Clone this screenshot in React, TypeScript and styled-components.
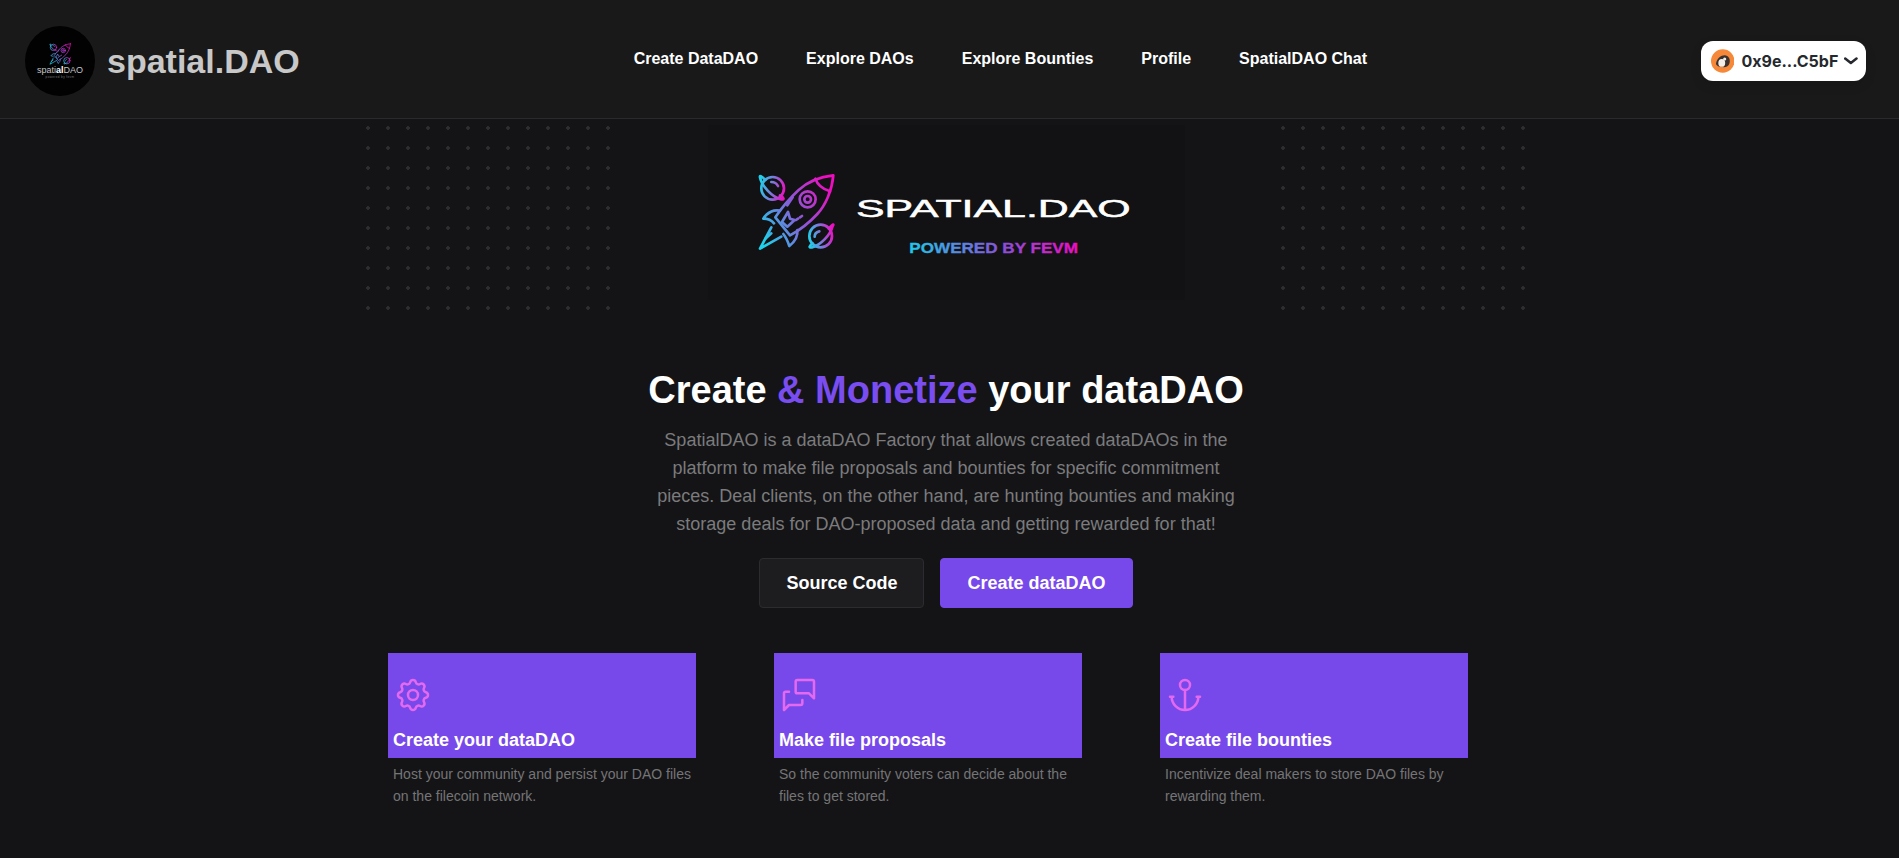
import React from "react";
import styled, { createGlobalStyle } from "styled-components";
import { TbSettings, TbMessages, TbAnchor } from "react-icons/tb";

const GlobalStyle = createGlobalStyle`
  html, body {
    margin: 0;
    background: #141416;
    font-family: "Liberation Sans", Arial, sans-serif;
  }
  * {
    box-sizing: border-box;
  }
`;

const Page = styled.div`
  height: 858px;
  overflow: hidden;
  display: flex;
  flex-direction: column;
  background: #141416;
`;

const Header = styled.header`
  flex: none;
  height: 119px;
  padding: 4px 33px 0 25px;
  display: flex;
  align-items: center;
  justify-content: space-between;
  background: #19191a;
  border-bottom: 1px solid #2a2a2b;
`;

const Brand = styled.div`
  display: flex;
  align-items: center;
  gap: 12px;
  font-size: 34px;
  font-weight: 700;
  color: #c8c8c8;
`;

const BrandCircle = styled.div`
  width: 70px;
  height: 70px;
  border-radius: 50%;
  background: #020203;
  display: flex;
  flex-direction: column;
  align-items: center;
  padding-top: 17px;
`;

const BrandCircleText = styled.span`
  font-size: 9px;
  line-height: 9px;
  margin-top: 1px;
  font-weight: 400;
  color: #c4c4c8;
  b {
    color: #fff;
  }
`;

const BrandCircleSub = styled.span`
  font-size: 3px;
  line-height: 4px;
  letter-spacing: 0.4px;
  font-weight: 400;
  color: #77777a;
`;

const Nav = styled.nav`
  display: flex;
  gap: 48px;
  margin-bottom: 5px;
`;

const NavLink = styled.a`
  font-size: 16px;
  font-weight: 700;
  color: #fff;
  cursor: pointer;
`;

const Wallet = styled.button`
  width: 165px;
  height: 40px;
  padding: 0 8px 0 10px;
  border: 0;
  border-radius: 12px;
  background: #fff;
  display: flex;
  align-items: center;
  gap: 6px;
  font-family: Inter, sans-serif;
  font-size: 16px;
  font-weight: 700;
  color: #25292e;
  box-shadow: 0 4px 12px rgba(0, 0, 0, 0.1);

  svg:first-child {
    margin-right: 1px;
  }
`;

const Hero = styled.section`
  flex: none;
  margin-top: 6px;
  padding-right: 7px;
  display: flex;
  justify-content: center;
  gap: 96px;
`;

const Dots = styled.div`
  width: 246px;
  height: 186px;
  margin-top: 1px;
  background-image: radial-gradient(circle, #2e2e30 1.5px, transparent 2.1px);
  background-size: 20px 20px;
  background-position: -8px -8px;
`;

const Banner = styled.div`
  width: 477px;
  height: 175px;
  background: #121214;
`;

const Intro = styled.section`
  flex: none;
  margin-top: 54px;
  padding-right: 7px;
  display: flex;
  flex-direction: column;
  align-items: center;
`;

const Title = styled.h1`
  margin: 0;
  font-size: 38px;
  line-height: 48px;
  font-weight: 700;
  color: #fff;
  text-align: center;
`;

const Accent = styled.span`
  color: #7a4df0;
`;

const Lead = styled.p`
  width: 590px;
  margin: 12px 0 0;
  font-size: 18px;
  line-height: 28px;
  color: #7b7b7d;
  text-align: center;
`;

const Actions = styled.div`
  margin-top: 20px;
  display: flex;
  gap: 16px;
`;

const ActionButton = styled.button<{ $primary?: boolean }>`
  height: 50px;
  padding: 0 26px;
  border-radius: 4px;
  border: 1px solid ${(p) => (p.$primary ? "#7849ea" : "#2c2c30")};
  background: ${(p) => (p.$primary ? "#7849ea" : "#1d1d20")};
  font-family: inherit;
  font-size: 18px;
  font-weight: 700;
  color: #fff;
`;

const Cards = styled.section`
  flex: none;
  margin-top: 45px;
  padding-right: 43px;
  display: flex;
  justify-content: center;
  gap: 78px;
`;

const Card = styled.article`
  width: 308px;
`;

const CardHead = styled.div`
  height: 105px;
  padding: 22px 5px 0 5px;
  background: #7849ea;
  display: flex;
  flex-direction: column;
  color: #fff;

  svg {
    display: block;
    flex: none;
    color: #e369ee;
    stroke-width: 1.5;
  }
`;

const CardTitle = styled.h3`
  margin: 13px 0 0;
  font-size: 18px;
  line-height: 24px;
  font-weight: 700;
`;

const CardText = styled.p`
  margin: 5px 0 0;
  padding: 0 5px;
  font-size: 14px;
  line-height: 22px;
  color: #757577;
`;

const RocketGradients = () => (
  <defs>
    <linearGradient id="rocketGrad" gradientUnits="userSpaceOnUse" x1="180" y1="340" x2="402" y2="220">
      <stop offset="0" stopColor="#1fd0ea" />
      <stop offset="0.5" stopColor="#8a5ad8" />
      <stop offset="1" stopColor="#f00cc0" />
    </linearGradient>
    <linearGradient id="planetTopGrad" gradientUnits="userSpaceOnUse" x1="178" y1="200" x2="256" y2="215">
      <stop offset="0" stopColor="#1fd0ea" />
      <stop offset="0.55" stopColor="#8a6ad8" />
      <stop offset="1" stopColor="#f00cc0" />
    </linearGradient>
    <linearGradient id="planetBottomGrad" gradientUnits="userSpaceOnUse" x1="325" y1="355" x2="402" y2="340">
      <stop offset="0" stopColor="#1fd0ea" />
      <stop offset="0.55" stopColor="#8a6ad8" />
      <stop offset="1" stopColor="#f00cc0" />
    </linearGradient>
    <linearGradient id="fevmGrad" gradientUnits="userSpaceOnUse" x1="630" y1="0" x2="1135" y2="0">
      <stop offset="0" stopColor="#1fc8ea" />
      <stop offset="0.55" stopColor="#8a50d8" />
      <stop offset="1" stopColor="#f00cc0" />
    </linearGradient>
  </defs>
);

const Rocket = () => (
  <g fill="none" strokeWidth="8" strokeLinecap="round" strokeLinejoin="round">
    <g stroke="url(#rocketGrad)">
      <path d="M400 166C360 170 322 186 296 210C270 234 246 262 226 292L270 346C300 330 330 306 352 282C376 256 396 212 400 166Z" />
      <path d="M346 176C352 194 370 208 390 214" />
      <circle cx="323" cy="238" r="24" />
      <circle cx="323" cy="238" r="10" />
      <path d="M240 272C222 268 202 276 190 296C202 296 214 300 222 310" />
      <path d="M292 330C294 346 286 364 268 378C264 366 258 352 250 342" />
      <path d="M214 322L180 386L244 350" />
      <path d="M196 356L214 340" />
      <path d="M246 306L264 276L270 296L284 300L262 320Z" />
      <path d="M288 300L294 296M300 292L306 288" />
      <path d="M262 256L278 232" />
    </g>
    <g stroke="url(#planetTopGrad)">
      <circle cx="218" cy="205" r="34" />
      <path d="M196 180C186 170 178 164 180 172C184 196 216 232 244 238C254 240 252 232 240 226" />
      <path d="M214 186C222 186 230 190 234 198" />
    </g>
    <g stroke="url(#planetBottomGrad)">
      <circle cx="362" cy="348" r="34" />
      <path d="M386 326C396 316 404 308 398 318C392 344 362 376 336 382C326 384 326 378 338 370" />
      <path d="M344 350C344 342 350 336 358 334" />
    </g>
  </g>
);

const BannerLogo = () => (
  <svg width="477" height="175" viewBox="24 15 1431 525">
    <RocketGradients />
    <Rocket />
    <text
      x="468"
      y="290"
      textLength="824"
      lengthAdjust="spacingAndGlyphs"
      fontFamily="'Liberation Sans', sans-serif"
      fontSize="74"
      fill="#fff"
      stroke="#fff"
      strokeWidth="1.5"
    >
      SPATIAL.DAO
    </text>
    <text
      x="628"
      y="398"
      textLength="506"
      lengthAdjust="spacingAndGlyphs"
      fontFamily="'Liberation Sans', sans-serif"
      fontWeight="700"
      fontSize="46"
      fill="url(#fevmGrad)"
      stroke="url(#fevmGrad)"
      strokeWidth="1"
    >
      POWERED BY FEVM
    </text>
  </svg>
);

const WalletAvatar = () => (
  <svg width="24" height="24" viewBox="0 0 24 24">
    <circle cx="12" cy="12" r="12" fill="#f6883a" />
    <path d="M5 15C6 9 10 6 14 6C18 6 20 10 19 14C18 18 14 19 11 18C8 18 6 17 5 15Z" fill="#3b3230" />
    <ellipse cx="11" cy="14" rx="3.5" ry="4" fill="#f3efe8" />
    <circle cx="14" cy="10" r="1.6" fill="#f3efe8" />
  </svg>
);

const Chevron = () => (
  <svg width="14" height="8" viewBox="0 0 14 8">
    <path d="M1.2 1.5L7 6L12.8 1.5" fill="none" stroke="#25292e" strokeWidth="2.6" strokeLinecap="round" strokeLinejoin="round" />
  </svg>
);

const navItems = ["Create DataDAO", "Explore DAOs", "Explore Bounties", "Profile", "SpatialDAO Chat"];

const features = [
  {
    icon: <TbSettings size={40} />,
    title: "Create your dataDAO",
    text: "Host your community and persist your DAO files on the filecoin network.",
  },
  {
    icon: <TbMessages size={40} />,
    title: "Make file proposals",
    text: "So the community voters can decide about the files to get stored.",
  },
  {
    icon: <TbAnchor size={40} />,
    title: "Create file bounties",
    text: "Incentivize deal makers to store DAO files by rewarding them.",
  },
];

const App: React.FC = () => {
  return (
    <Page>
      <GlobalStyle />
      <Header>
        <Brand>
          <BrandCircle>
            <svg width="22" height="22" viewBox="170 160 236 232">
              <Rocket />
            </svg>
            <BrandCircleText>
              spati<b>al</b>DAO
            </BrandCircleText>
            <BrandCircleSub>powered by fevm</BrandCircleSub>
          </BrandCircle>
          spatial.DAO
        </Brand>
        <Nav>
          {navItems.map((item) => (
            <NavLink key={item}>{item}</NavLink>
          ))}
        </Nav>
        <Wallet type="button">
          <WalletAvatar />
          0x9e...C5bF
          <Chevron />
        </Wallet>
      </Header>
      <Hero>
        <Dots />
        <Banner>
          <BannerLogo />
        </Banner>
        <Dots />
      </Hero>
      <Intro>
        <Title>
          Create <Accent>&amp; Monetize</Accent> your dataDAO
        </Title>
        <Lead>
          SpatialDAO is a dataDAO Factory that allows created dataDAOs in the platform to make file proposals and
          bounties for specific commitment pieces. Deal clients, on the other hand, are hunting bounties and making
          storage deals for DAO-proposed data and getting rewarded for that!
        </Lead>
        <Actions>
          <ActionButton type="button">Source Code</ActionButton>
          <ActionButton type="button" $primary>
            Create dataDAO
          </ActionButton>
        </Actions>
      </Intro>
      <Cards>
        {features.map((f) => (
          <Card key={f.title}>
            <CardHead>
              {f.icon}
              <CardTitle>{f.title}</CardTitle>
            </CardHead>
            <CardText>{f.text}</CardText>
          </Card>
        ))}
      </Cards>
    </Page>
  );
};

export default App;
